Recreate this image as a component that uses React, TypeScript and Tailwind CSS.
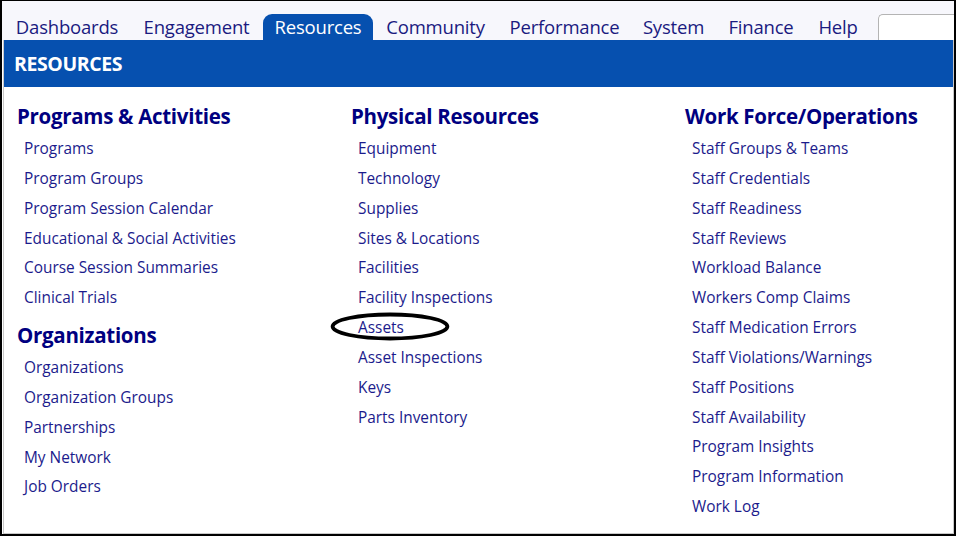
import React from "react";

const navItems: { label: string; w: string; active?: boolean }[] = [
  { label: "Dashboards", w: "w-[126px]" },
  { label: "Engagement", w: "w-[133px]" },
  { label: "Resources", w: "w-[110px]", active: true },
  { label: "Community", w: "w-[125px]" },
  { label: "Performance", w: "w-[133px]" },
  { label: "System", w: "w-[85px]" },
  { label: "Finance", w: "w-[90px]" },
  { label: "Help", w: "w-[64px]" },
];

type Section = { title: string; links: string[] };

const columns: Section[][] = [
  [
    {
      title: "Programs & Activities",
      links: [
        "Programs",
        "Program Groups",
        "Program Session Calendar",
        "Educational & Social Activities",
        "Course Session Summaries",
        "Clinical Trials",
      ],
    },
    {
      title: "Organizations",
      links: ["Organizations", "Organization Groups", "Partnerships", "My Network", "Job Orders"],
    },
  ],
  [
    {
      title: "Physical Resources",
      links: [
        "Equipment",
        "Technology",
        "Supplies",
        "Sites & Locations",
        "Facilities",
        "Facility Inspections",
        "Assets",
        "Asset Inspections",
        "Keys",
        "Parts Inventory",
      ],
    },
  ],
  [
    {
      title: "Work Force/Operations",
      links: [
        "Staff Groups & Teams",
        "Staff Credentials",
        "Staff Readiness",
        "Staff Reviews",
        "Workload Balance",
        "Workers Comp Claims",
        "Staff Medication Errors",
        "Staff Violations/Warnings",
        "Staff Positions",
        "Staff Availability",
        "Program Insights",
        "Program Information",
        "Work Log",
      ],
    },
  ],
];

function MenuLink({ label }: { label: string }) {
  return (
    <li className="relative h-[29.85px] leading-[29.85px] pl-[7px]">
      <a href="#" className="text-[#1b1b8c] text-[15.4px] whitespace-nowrap">
        {label}
      </a>
      {label === "Assets" && (
        <svg
          className="absolute left-[-21px] top-[-1px] pointer-events-none"
          width="122"
          height="32"
          viewBox="0 0 122 32"
        >
          <ellipse cx="60" cy="14.5" rx="57.4" ry="12" fill="none" stroke="#000" strokeWidth="3.8" />
        </svg>
      )}
    </li>
  );
}

export default function App() {
  return (
    <div
      className="w-[956px] h-[536px] bg-white border-t border-l-2 border-r-2 border-b-2 border-black flex flex-col overflow-hidden"
      style={{ fontFamily: '"Open Sans", "Noto Sans", sans-serif' }}
    >
      {/* top navigation tabs */}
      <nav className="h-[39px] shrink-0 bg-[#f7f7fc] flex items-end pl-[2px]">
        {navItems.map((item) => (
          <div
            key={item.label}
            className={`${item.w} h-[26px] flex items-center justify-center text-[18.5px] tracking-[-0.2px] whitespace-nowrap ${
              item.active ? "bg-[#0650af] text-white rounded-t-[9px]" : "text-[#1a1a80]"
            }`}
          >
            {item.label}
          </div>
        ))}
        <div className="ml-[8px] flex-1 h-[26px] bg-white border-t border-l border-[#b4b4b4] rounded-tl-[5px]" />
      </nav>

      {/* dropdown panel */}
      <div className="flex-1 ml-[1px] border-l border-r border-b border-[#c8c8c8] flex flex-col">
        <div className="h-[47px] shrink-0 bg-[#0650af] flex items-center pl-[10px]">
          <span className="text-white font-bold text-[19.5px] tracking-[-0.4px]">RESOURCES</span>
        </div>
        <div className="grid grid-cols-[334px_334px_1fr] pl-[13px] pt-[14px]">
          {columns.map((col, ci) => (
            <div key={ci}>
              {col.map((section, si) => (
                <div key={section.title} className={si > 0 ? "mt-[7px]" : ""}>
                  <h2 className="h-[30px] leading-[30px] text-[20.5px] font-bold text-[#000080] tracking-[-0.3px] whitespace-nowrap">
                    {section.title}
                  </h2>
                  <ul className="mt-[3px]">
                    {section.links.map((l) => (
                      <MenuLink key={l} label={l} />
                    ))}
                  </ul>
                </div>
              ))}
            </div>
          ))}
        </div>
      </div>
    </div>
  );
}
